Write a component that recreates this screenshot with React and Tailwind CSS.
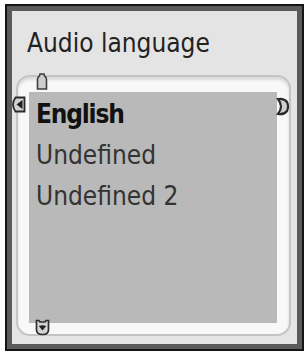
import React from "react";

const items = [
  { label: "English", active: true },
  { label: "Undefined" },
  { label: "Undefined 2" },
];

function UpMark() {
  return (
    <svg width="12" height="17" viewBox="0 0 12 17">
      <path d="M1.5 16 V6.5 Q1.5 4 3.5 3 L4 1 H8 L8.5 3 Q10.5 4 10.5 6.5 V16 Z" fill="#cdcdcd" stroke="#3e3e3e" strokeWidth="1.6" />
    </svg>
  );
}

function LeftMark() {
  return (
    <svg width="14" height="17" viewBox="0 0 14 17">
      <path d="M3.5 1.5 H12.5 V15.5 H3.5 Q1 12 1 8.5 Q1 5 3.5 1.5 Z" fill="#d0d0d0" stroke="#2a2a2a" strokeWidth="1.8" />
      <path d="M10.5 4 L4.5 8.5 L10.5 13 Z" fill="#1e1e1e" />
    </svg>
  );
}

function RightMark() {
  return (
    <svg width="14" height="19" viewBox="0 0 14 19">
      <path d="M2 2 Q8 1 11 5 Q13 9.5 11 14 Q8 18 2 17 Q5 13 5 9.5 Q5 6 2 2 Z" fill="#cfcfcf" stroke="#2a2a2a" strokeWidth="2.2" />
    </svg>
  );
}

function DownMark() {
  return (
    <svg width="15" height="17" viewBox="0 0 15 17">
      <path d="M1.5 1.5 H4 L5 3 H10 L11 1.5 H13.5 V11 Q13.5 15.5 7.5 15.5 Q1.5 15.5 1.5 11 Z" fill="#d4d4d4" stroke="#2e2e2e" strokeWidth="1.7" />
      <path d="M3.8 7 Q7.5 5.3 11.2 7 L7.5 11.5 Z" fill="#222" />
    </svg>
  );
}

export default function App() {
  return (
    <div
      className="h-[354px] w-[304px] bg-white pl-[5px] pt-[4px]"
      style={{ fontFamily: '"DejaVu Sans Condensed", "DejaVu Sans", sans-serif' }}
    >
      <div className="h-[347px] w-[299px] border-2 border-[#151515] bg-[#5b5b5b] p-[5px]">
        <div className="flex h-full flex-col bg-[#e4e4e4] pl-[4px] pr-[6px] pt-[16px]">
          {/* title */}
          <div className="pl-[11px] text-[26px] leading-[32px] text-[#222]">Audio language</div>

          {/* list frame */}
          <div className="relative mt-[16px] h-[261px] rounded-[14px] border-2 border-[#c4c4c4] bg-[#f8f8f8] pb-[11px] pl-[11px] pr-[12px] pt-[15px] shadow-[inset_0_3px_3px_rgba(0,0,0,0.12)]">
            <div className="flex h-full flex-col bg-[#b9b9b9] pl-[7px] pt-[2px]">
              {items.map((it) => (
                <div
                  key={it.label}
                  className={`text-[26px] leading-[41px] ${
                    it.active ? "font-bold tracking-[-1.2px] text-[#111]" : "text-[#333]"
                  }`}
                >
                  {it.label}
                </div>
              ))}
            </div>

            <div className="absolute left-[18px] top-[-4px]">
              <UpMark />
            </div>
            <div className="absolute left-[-6px] top-[19px]">
              <LeftMark />
            </div>
            <div className="absolute left-[258px] top-[20px]">
              <RightMark />
            </div>
            <div className="absolute left-[17px] top-[242px]">
              <DownMark />
            </div>
          </div>
        </div>
      </div>
    </div>
  );
}
